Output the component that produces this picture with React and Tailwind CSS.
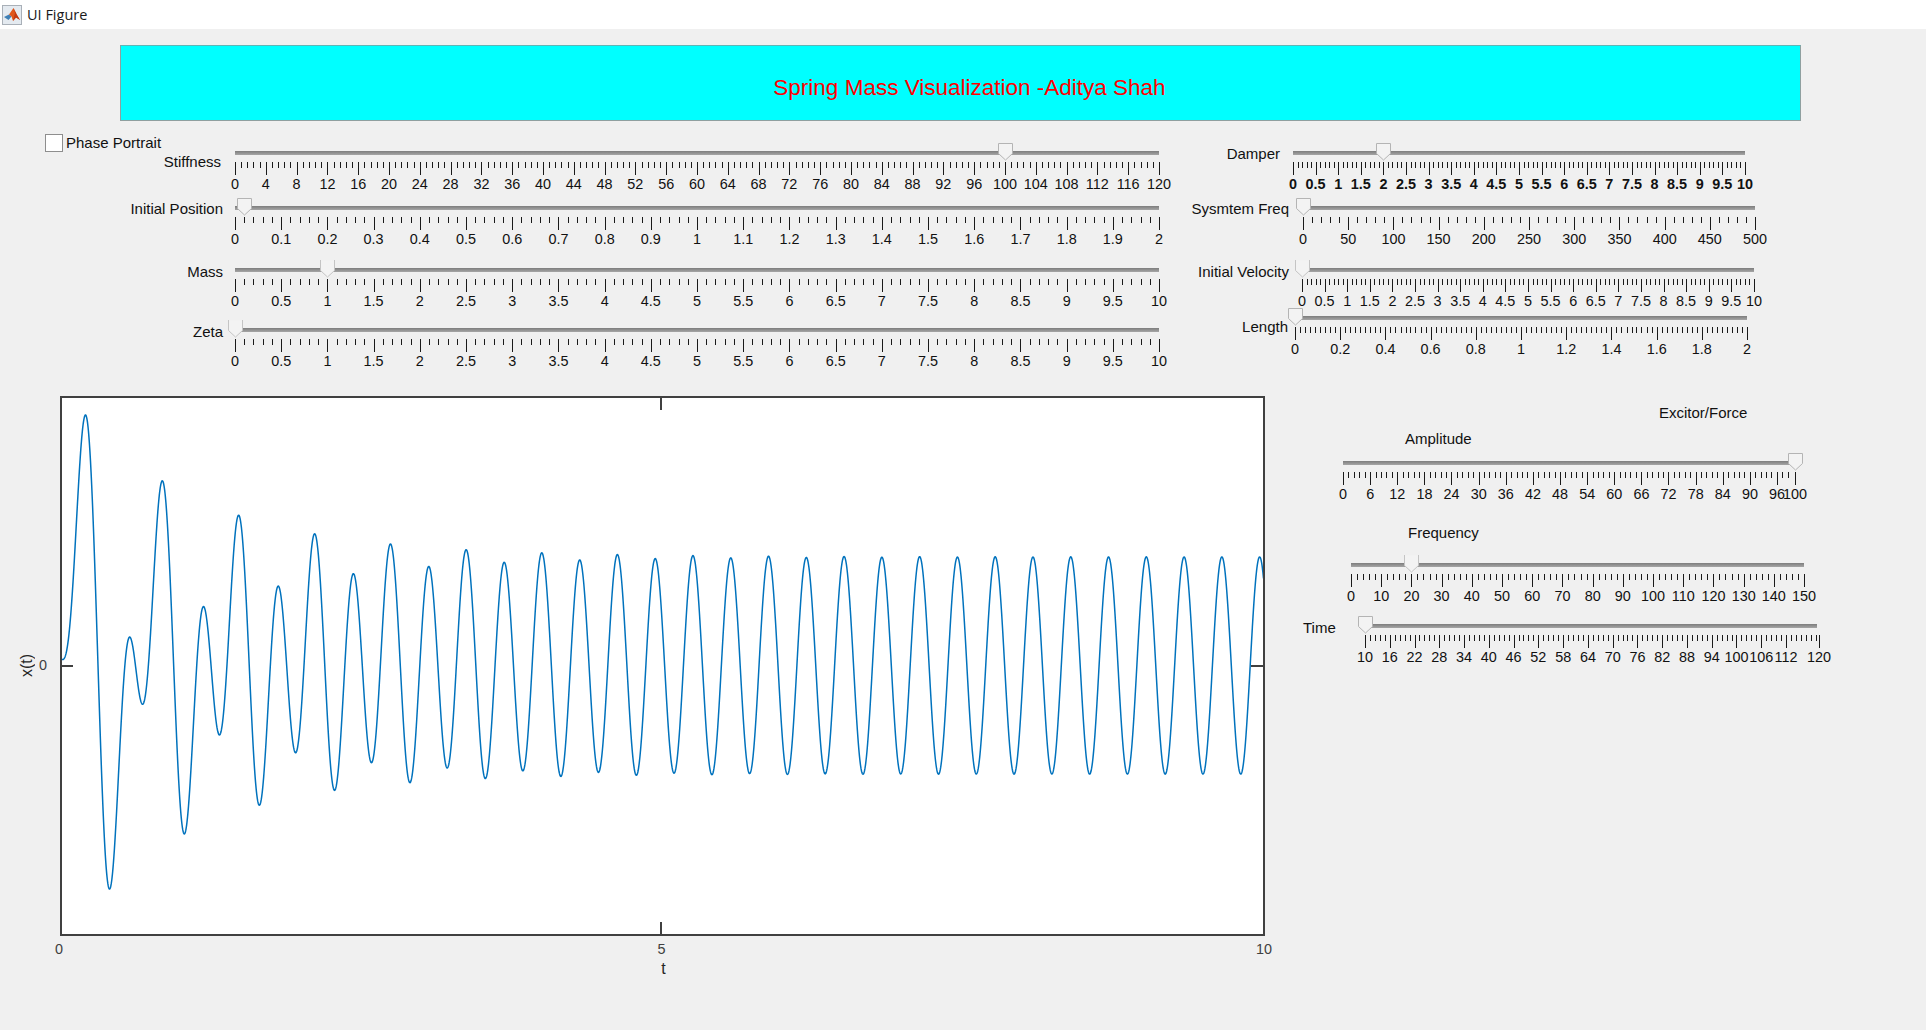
import React from "react";

const seq = (min, max, step) => {
  const out = [];
  for (let i = 0; min + i * step <= max + 1e-9; i++) {
    out.push(+(min + i * step).toFixed(3));
  }
  return out;
};

// some matlab sliders end on a major tick which is off the regular step
const stiffness = { min: 0, max: 120, majors: seq(0, 120, 4), minor: 0.8 };
const position = { min: 0, max: 2, majors: seq(0, 2, 0.1), minor: 0.02 };
const tenByHalf = { min: 0, max: 10, majors: seq(0, 10, 0.5), minor: 0.1 };
const freq = { min: 0, max: 500, majors: seq(0, 500, 50), minor: 10 };
const length = { min: 0, max: 2, majors: seq(0, 2, 0.2), minor: 0.2 / 9 };
const amplitude = { min: 0, max: 100, majors: [...seq(0, 96, 6), 100], minor: 1.2 };
const frequency = { min: 0, max: 150, majors: seq(0, 150, 10), minor: 2 };
const time = { min: 10, max: 120, majors: [...seq(10, 112, 6), 120], minor: 1.2 };

function Ticks({ scale, width }) {
  const { min, max, majors, minor } = scale;
  const x = (v) => Math.round(((v - min) / (max - min)) * width);
  const minors = seq(min, max, minor).filter(
    (v) => !majors.some((m) => Math.abs(m - v) < minor / 2),
  );
  return (
    <svg width={width + 1} height="13" className="block" shapeRendering="crispEdges">
      {majors.map((v) => (
        <rect key={v} x={x(v)} y="0" width="1" height="13" fill="#1a1a1a" />
      ))}
      {minors.map((v) => (
        <rect key={v} x={x(v)} y="0" width="1" height="6" fill="#1a1a1a" />
      ))}
    </svg>
  );
}

function TickLabels({ values, bold }) {
  return (
    <div className={`flex h-[14px] text-[14.4px] leading-[14px] ${bold ? "font-bold" : ""}`}>
      {values.map((v, i) =>
        i < values.length - 1 ? (
          <div key={v} style={{ flex: `${values[i + 1] - v} 0 0` }}>
            <span className="flex w-0 justify-center whitespace-nowrap">{v}</span>
          </div>
        ) : (
          <span key={v} className="flex w-0 justify-center whitespace-nowrap">
            {v}
          </span>
        ),
      )}
    </div>
  );
}

function Thumb({ left, clipped }) {
  return (
    <svg
      width="15"
      height="18"
      viewBox="0 0 15 18"
      className="absolute top-0"
      style={{ left }}
    >
      <path
        d="M0.5 0.5H14.5V10.5L7.5 17L0.5 10.5Z"
        fill="#f3f3f3"
        stroke={clipped ? "none" : "#b4b4b4"}
      />
      {clipped && (
        <path d="M0.5 0V10.5L7.5 17L14.5 10.5V0" fill="none" stroke="#c4c4c4" />
      )}
    </svg>
  );
}

function Slider({ scale, width, value, bold, clipped, trackEnd = 0, className = "" }) {
  const frac = (value - scale.min) / (scale.max - scale.min);
  return (
    <div className={`relative shrink-0 ${className}`} style={{ width }}>
      <div className="pt-[8px]">
        <div
          className="h-[4px] bg-gradient-to-b from-[#7d7d7d] to-[#a6a6a6]"
          style={{ width: width - trackEnd }}
        />
      </div>
      <div className="mt-[7px]">
        <Ticks scale={scale} width={width} />
      </div>
      <div className="mt-[2px]">
        <TickLabels values={scale.majors} bold={bold} />
      </div>
      <Thumb left={frac * width - 7} clipped={clipped} />
    </div>
  );
}

function Row({ label, labelClass, rowClass = "", ...slider }) {
  return (
    <div className={`flex items-start ${rowClass}`}>
      <div className={`shrink-0 whitespace-nowrap text-right leading-[16px] ${labelClass}`}>
        {label}
      </div>
      <Slider {...slider} />
    </div>
  );
}

// m x'' + c x' + k x = F sin(wt), m=1 c=2 k=100 F=100 w=20, x(0)=0.02 v(0)=0
// decay and the cos part are nudged a little, it fits the picture better
function buildCurve() {
  const A = 100 / Math.hypot(300, 40);
  const phi = Math.atan2(40, -300);
  const wd = Math.sqrt(99);
  const a = 0.02 + A * Math.sin(phi);
  const b = (a - A * 20 * Math.cos(-phi)) / wd;
  const pts = [];
  for (let i = 0; i <= 4000; i++) {
    const t = i / 400;
    const xt =
      Math.exp(-0.95 * t) * ((a - 0.012) * Math.cos(wd * t) + b * Math.sin(wd * t)) +
      0.012 * Math.exp(-20 * t) +
      A * Math.sin(20 * t - phi);
    pts.push(`${(t * 120.25 - 1).toFixed(2)},${(267.5 - 328.6 * xt).toFixed(2)}`);
  }
  return pts.join(" ");
}

function Plot() {
  return (
    <div className="w-[1265px] shrink-0 text-[#404040]">
      <div className="flex items-center">
        <div className="flex h-[540px] w-[60px] items-center pl-[19px]">
          <span className="w-[16px] rotate-180 whitespace-nowrap text-[16px] leading-[16px] text-[#262626] [writing-mode:vertical-rl]">
            x(t)
          </span>
          <span className="ml-[4px] text-[14.4px]">0</span>
        </div>
        <div className="h-[540px] w-[1205px] border-2 border-[#404040] bg-white">
          <svg width="1201" height="536" className="block">
            <polyline points={buildCurve()} fill="none" stroke="#0072bd" strokeWidth="1.5" />
            <g fill="#404040" shapeRendering="crispEdges">
              <rect x="0" y="267" width="11" height="2" />
              <rect x="1189" y="267" width="12" height="2" />
              <rect x="598" y="0" width="2" height="12" />
              <rect x="598" y="524" width="2" height="12" />
            </g>
          </svg>
        </div>
      </div>
      <div className="ml-[59px] mt-[6px] w-[1205px]">
        <TickLabels values={[0, 5, 10]} />
      </div>
      <div className="ml-[61px] mt-[5px] w-[1205px] text-center text-[16px] leading-[16px] text-[#262626]">
        t
      </div>
    </div>
  );
}

function MatlabIcon() {
  return (
    <svg width="20" height="20" viewBox="0 0 20 20" className="ml-[2px]">
      <rect x="0.5" y="0.5" width="19" height="19" fill="#e4eaf0" stroke="#a9b0b8" />
      <path d="M2 12L7 9.5L9.5 11.5L6.5 15Z" fill="#3f7fb5" />
      <path d="M7 9.5L11.5 3L15 10L18 15L14 12.5L11 16L9.5 11.5Z" fill="#e0561b" />
      <path d="M11.5 3L13 8L11 16L14 12.5L18 15L15 10Z" fill="#c23a12" />
    </svg>
  );
}

export default function App() {
  return (
    <div className="flex h-[1030px] w-[1926px] flex-col overflow-hidden bg-[#f0f0f0] font-['Liberation_Sans',sans-serif] text-[15px] text-[#111]">
      <div className="flex h-[29px] shrink-0 items-center bg-white">
        <MatlabIcon />
        <span className="ml-[5px] font-['Open_Sans',sans-serif] text-[14.5px] text-[#1a1a1a]">
          UI Figure
        </span>
      </div>

      <div className="ml-[120px] mt-[16px] flex h-[76px] w-[1681px] shrink-0 items-center justify-center border border-[#8f9f9f] border-t-[#5fb5b5] bg-[#00ffff] pl-[18px] pt-[10px] text-[22.5px] text-[#ff0000]">
        Spring Mass Visualization -Aditya Shah
      </div>

      <div className="mt-[13px] flex shrink-0 items-start">
        <div className="w-[1180px] shrink-0">
          <div className="flex h-[9px] items-start pl-[45px]">
            <div className="h-[18px] w-[18px] shrink-0 border border-[#8e8e8e] bg-white" />
            <span className="ml-[3px] leading-[18px]">Phase Portrait</span>
          </div>
          <Row label="Stiffness" labelClass="mt-[11px] w-[221px]" className="ml-[14px]" scale={stiffness} width={924} value={100} />
          <Row label="Initial Position" labelClass="mt-[3px] w-[223px]" rowClass="mt-[7px]" className="ml-[12px]" scale={position} width={924} value={0.02} />
          <Row label="Mass" labelClass="mt-[4px] w-[223px]" rowClass="mt-[14px]" className="ml-[12px]" scale={tenByHalf} width={924} value={1} clipped />
          <Row label="Zeta" labelClass="mt-[4px] w-[223px]" rowClass="mt-[12px]" className="ml-[12px]" scale={tenByHalf} width={924} value={0} clipped />
        </div>

        <div className="pt-[9px]">
          <Row label="Damper" labelClass="mt-[3px] w-[100px]" className="ml-[13px]" scale={tenByHalf} width={452} value={2} bold />
          <Row label="Sysmtem Freq" labelClass="mt-[3px] w-[109px]" rowClass="mt-[7px]" className="ml-[14px]" scale={freq} width={452} value={0} />
          <Row label="Initial Velocity" labelClass="mt-[4px] w-[109px]" rowClass="mt-[14px]" className="ml-[13px]" scale={tenByHalf} width={452} value={0} clipped />
          <Row label="Length" labelClass="mt-[11px] w-[108px]" className="ml-[7px]" scale={length} width={452} value={0} />
        </div>
      </div>

      <div className="mt-[28px] flex items-start">
        <Plot />
        <div className="pt-[9px]">
          <div className="ml-[394px] leading-[16px]">Excitor/Force</div>
          <div className="ml-[140px] mt-[10px] leading-[16px]">Amplitude</div>
          <Slider className="ml-[78px] mt-[6px]" scale={amplitude} width={452} value={100} />
          <div className="ml-[143px] mt-[24px] leading-[16px]">Frequency</div>
          <Slider className="ml-[86px] mt-[14px]" scale={frequency} width={453} value={20} clipped />
          <div className="mt-[13px] flex items-start">
            <div className="ml-[38px] mt-[4px] w-[62px] shrink-0 leading-[16px]">Time</div>
            <Slider scale={time} width={454} value={10} trackEnd={2} />
          </div>
        </div>
      </div>
    </div>
  );
}
